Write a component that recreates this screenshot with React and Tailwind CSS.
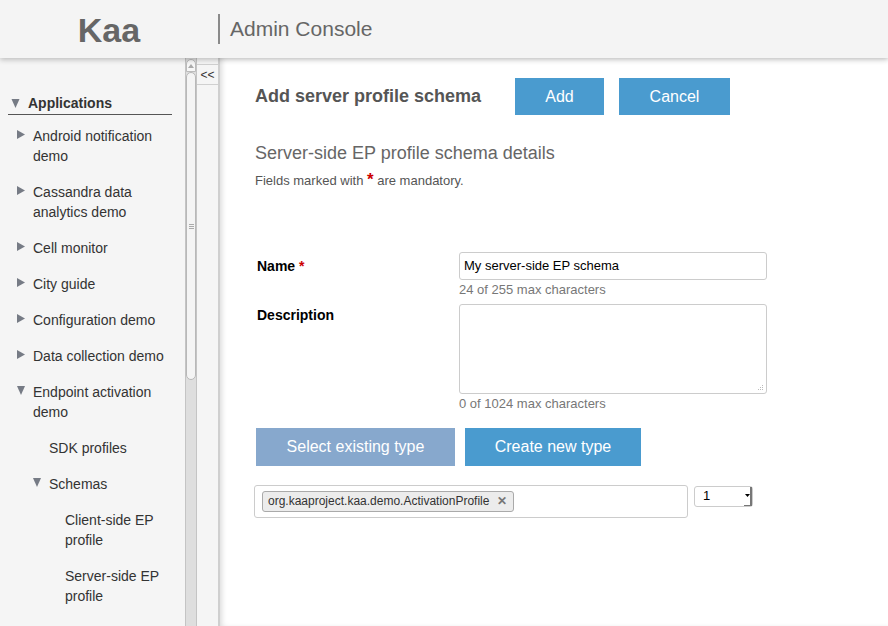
import React from 'react';

// Sidebar tree entries: depth decides the indent, caret is 'right', 'down' or none
const tree = [
  { label: ['Android notification', 'demo'], depth: 0, caret: 'right' },
  { label: ['Cassandra data', 'analytics demo'], depth: 0, caret: 'right' },
  { label: ['Cell monitor'], depth: 0, caret: 'right' },
  { label: ['City guide'], depth: 0, caret: 'right' },
  { label: ['Configuration demo'], depth: 0, caret: 'right' },
  { label: ['Data collection demo'], depth: 0, caret: 'right' },
  { label: ['Endpoint activation', 'demo'], depth: 0, caret: 'down' },
  { label: ['SDK profiles'], depth: 1 },
  { label: ['Schemas'], depth: 1, caret: 'down' },
  { label: ['Client-side EP', 'profile'], depth: 2 },
  { label: ['Server-side EP', 'profile'], depth: 2 },
];

const indent = ['pl-[17px]', 'pl-[33px]', 'pl-[49px]'];

const Caret = ({ dir }) => (
  <svg width="8" height="9" viewBox="0 0 8 9" className="mt-[4px] shrink-0">
    {dir === 'right' ? (
      <polygon points="0,0 8,4.5 0,9" fill="#767b85" />
    ) : (
      <polygon points="0,0 8,0 4,9" fill="#767b85" />
    )}
  </svg>
);

const TreeItem = ({ item }) => (
  <div className={`flex items-start gap-2 ${indent[item.depth]} mb-4`}>
    {item.caret ? <Caret dir={item.caret} /> : <span className="w-2 shrink-0" />}
    <div className="text-[14px] leading-5 text-[#333]">
      {item.label.map((l) => (
        <div key={l}>{l}</div>
      ))}
    </div>
  </div>
);

const Button = ({ children, className = '' }) => (
  <button type="button" className={`h-[37px] text-[16px] text-white ${className}`}>
    {children}
  </button>
);

export default function App() {
  return (
    <div className="w-[888px] h-[626px] overflow-hidden bg-white flex flex-col font-['Liberation_Sans',Arial,sans-serif]">
      {/* Top bar */}
      <header className="h-[58px] shrink-0 bg-[#f4f4f4] flex items-center shadow-[0_2px_5px_rgba(0,0,0,0.22)] relative z-10">
        <div className="w-[218px] text-center text-[34px] font-bold text-[#666] leading-none pt-[2px]">Kaa</div>
        <div className="h-[30px] border-l-2 border-[#8a8a8a]" />
        <div className="pl-[10px] text-[21px] text-[#666]">Admin Console</div>
      </header>

      <div className="flex flex-1 min-h-0">
        {/* Navigation tree */}
        <nav className="w-[185px] shrink-0 bg-[#f5f5f5] pt-[35px] pl-[8px] overflow-hidden">
          <div className="w-[164px] border-b border-[#555] flex items-center gap-2 pl-[3px] pb-[1px] leading-5">
            <svg width="9" height="9" viewBox="0 0 8 9">
              <polygon points="0,0 8,0 4,9" fill="#767b85" />
            </svg>
            <span className="text-[14px] font-bold text-[#333]">Applications</span>
          </div>
          <div className="pt-[11px] -ml-[8px]">
            {tree.map((item) => (
              <TreeItem key={item.label.join(' ')} item={item} />
            ))}
          </div>
        </nav>

        {/* Scrollbar */}
        <div className="w-[12px] shrink-0 bg-[#dedede] border-x border-[#c4c4c4] flex flex-col">
          <div className="h-[13px] mt-[1px] rounded-t-[6px] border border-[#bbb] bg-[#f7f7f7] flex items-center justify-center">
            <svg width="6" height="4" viewBox="0 0 6 4">
              <polygon points="0,4 3,0 6,4" fill="#aaa" />
            </svg>
          </div>
          <div className="h-[308px] rounded-[6px] border border-[#b8b8b8] bg-[#f4f4f4] flex items-center justify-center">
            <div className="flex flex-col gap-[1px]">
              <div className="w-[5px] h-px bg-[#aaa]" />
              <div className="w-[5px] h-px bg-[#aaa]" />
              <div className="w-[5px] h-px bg-[#aaa]" />
            </div>
          </div>
        </div>

        {/* Splitter */}
        <div className="w-[23px] shrink-0 bg-[#f5f5f5] border-r-2 border-[#cfcfcf]">
          <div className="mt-[6px] h-[21px] border-y border-[#d0d0d0] flex items-center justify-center text-[12px] text-[#333] leading-none">
            &lt;&lt;
          </div>
        </div>

        {/* Main content */}
        <main className="flex-1 pl-[35px] pt-[20px] shadow-[inset_4px_0_6px_-3px_rgba(0,0,0,0.18)]">
          <div className="flex items-center">
            <h1 className="text-[18px] font-bold text-[#555] w-[260px]">Add server profile schema</h1>
            <Button className="w-[89px] bg-[#4a9bcf]">Add</Button>
            <Button className="w-[111px] ml-[15px] bg-[#4a9bcf]">Cancel</Button>
          </div>

          <h2 className="mt-[26px] text-[18px] text-[#666] leading-6">Server-side EP profile schema details</h2>
          <p className="mt-[2px] text-[13px] text-[#555]">
            Fields marked with <span className="text-[#c00] text-[17px] font-bold">*</span> are mandatory.
          </p>

          <div className="mt-[59px] grid grid-cols-[202px_308px] pl-[2px]">
            <label className="pt-[4px] text-[14px] font-bold text-black">
              Name <span className="text-[#c00]">*</span>
            </label>
            <div>
              <div className="h-[28px] border border-[#ccc] rounded-[3px] flex items-center px-[4px] text-[13px] text-black">
                My server-side EP schema
              </div>
              <div className="text-[13px] text-[#777] mt-[2px] leading-4">24 of 255 max characters</div>
            </div>

            <label className="mt-[7px] text-[14px] font-bold text-black">Description</label>
            <div className="mt-[6px]">
              <div className="h-[90px] border border-[#ccc] rounded-[3px] relative">
                <svg width="7" height="7" viewBox="0 0 7 7" className="absolute right-[2px] bottom-[2px]">
                  <g fill="#bbb">
                    <rect x="5" y="1" width="1" height="1" />
                    <rect x="3" y="3" width="1" height="1" />
                    <rect x="5" y="3" width="1" height="1" />
                    <rect x="1" y="5" width="1" height="1" />
                    <rect x="3" y="5" width="1" height="1" />
                    <rect x="5" y="5" width="1" height="1" />
                  </g>
                </svg>
              </div>
              <div className="text-[13px] text-[#777] mt-[2px] leading-4">0 of 1024 max characters</div>
            </div>
          </div>

          <div className="mt-[16px] flex gap-[10px] pl-[1px]">
            <Button className="w-[199px] h-[38px] bg-[#87a8cd]">Select existing type</Button>
            <Button className="w-[176px] h-[38px] bg-[#4a9bcf]">Create new type</Button>
          </div>

          <div className="mt-[19px] flex items-start gap-[6px] -ml-[1px]">
            <div className="w-[434px] h-[33px] border border-[#ccc] rounded-[3px] flex items-center px-[7px]">
              <span className="h-[21px] border border-[#aaa] rounded-[3px] bg-[#ececec] flex items-center gap-[8px] pl-[5px] pr-[6px] text-[12px] text-[#333]">
                org.kaaproject.kaa.demo.ActivationProfile
                <span className="text-[#777] text-[12px] font-bold leading-none">✕</span>
              </span>
            </div>
            <div className="w-[59px] h-[21px] mt-[1px] border border-[#ccc] rounded-[3px] bg-white flex items-center justify-between pl-[8px] text-[13px] text-black">
              1
              <span className="h-full w-[8px] border-r-2 border-b border-[#777] flex items-center justify-center">
                <svg width="5" height="3" viewBox="0 0 5 3">
                  <polygon points="0,0 5,0 2.5,3" fill="#000" />
                </svg>
              </span>
            </div>
          </div>
        </main>
      </div>
    </div>
  );
}
